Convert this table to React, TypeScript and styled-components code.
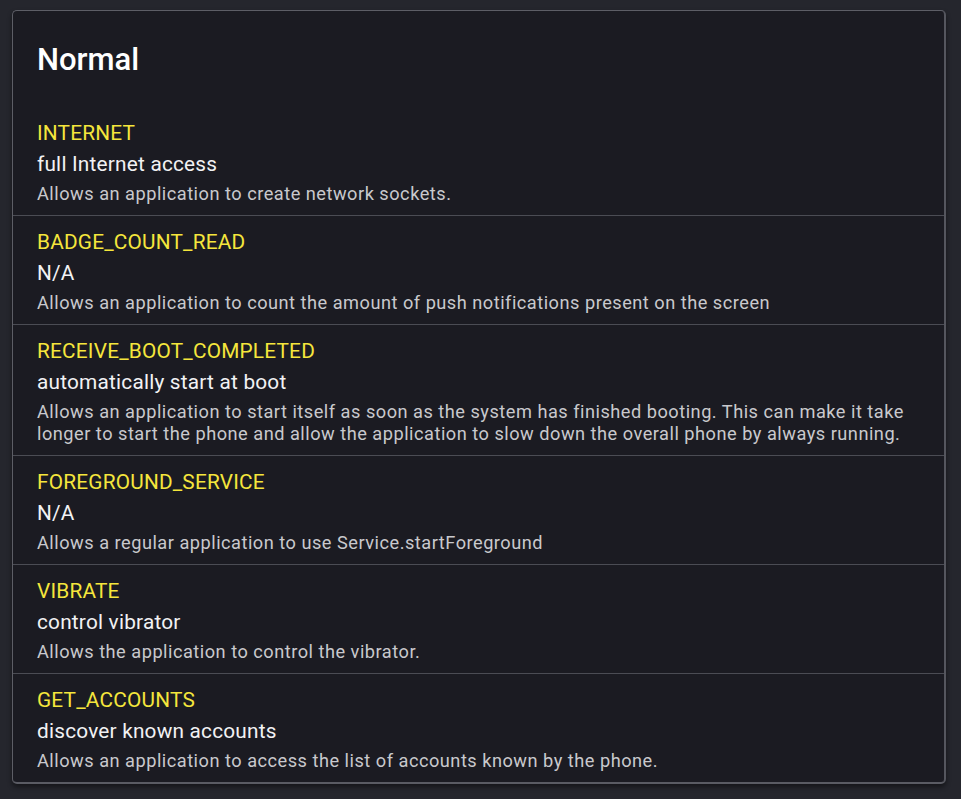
import React from "react";
import styled, { createGlobalStyle } from "styled-components";

const Global = createGlobalStyle`
  html, body { margin: 0; padding: 0; background: #25262d; }
  body { font-family: Roboto, "Noto Sans", sans-serif; }
`;

const Page = styled.div`
  padding: 10px 15px 16px 12px;
`;

const Card = styled.section`
  background: #1b1b22;
  border: 1px solid #5d5e66;
  border-right: 2px solid #55565e;
  border-bottom: 2px solid #5a5b63;
  border-radius: 5px;
  box-shadow: 0 3px 5px rgba(0,0,0,0.45);
  overflow: hidden;
`;

const Title = styled.h2`
  margin: 0;
  padding: 31px 24px 29px;
  font-size: 31px;
  line-height: 36px;
  font-weight: 500;
  color: #ffffff;
`;

const Row = styled.div`
  padding: 11px 24px 10.5px;
  display: flex;
  flex-direction: column;
  & + & { border-top: 1px solid #4b4c54; }
`;

const Name = styled.div`
  font-size: 20.8px;
  line-height: 31px;
  letter-spacing: 0.01em;
  color: #f5e63c;
`;

const Label = styled.div`
  font-size: 20.8px;
  line-height: 31px;
  letter-spacing: 0.01em;
  color: #f2f2f4;
`;

const Desc = styled.div`
  font-size: 18.2px;
  line-height: 21.5px;
  letter-spacing: 0.5px;
  color: #c9c9cd;
  padding-top: 3px;
`;

const perms = [
  { name: "INTERNET", label: "full Internet access", desc: "Allows an application to create network sockets." },
  { name: "BADGE_COUNT_READ", label: "N/A", desc: "Allows an application to count the amount of push notifications present on the screen" },
  { name: "RECEIVE_BOOT_COMPLETED", label: "automatically start at boot", desc: "Allows an application to start itself as soon as the system has finished booting. This can make it take longer to start the phone and allow the application to slow down the overall phone by always running." },
  { name: "FOREGROUND_SERVICE", label: "N/A", desc: "Allows a regular application to use Service.startForeground" },
  { name: "VIBRATE", label: "control vibrator", desc: "Allows the application to control the vibrator." },
  { name: "GET_ACCOUNTS", label: "discover known accounts", desc: "Allows an application to access the list of accounts known by the phone." },
];

export default function App() {
  return (
    <Page>
      <Global />
      <Card>
        <Title>Normal</Title>
        {perms.map((p) => (
          <Row key={p.name}>
            <Name>{p.name}</Name>
            <Label>{p.label}</Label>
            <Desc>{p.desc}</Desc>
          </Row>
        ))}
      </Card>
    </Page>
  );
}
